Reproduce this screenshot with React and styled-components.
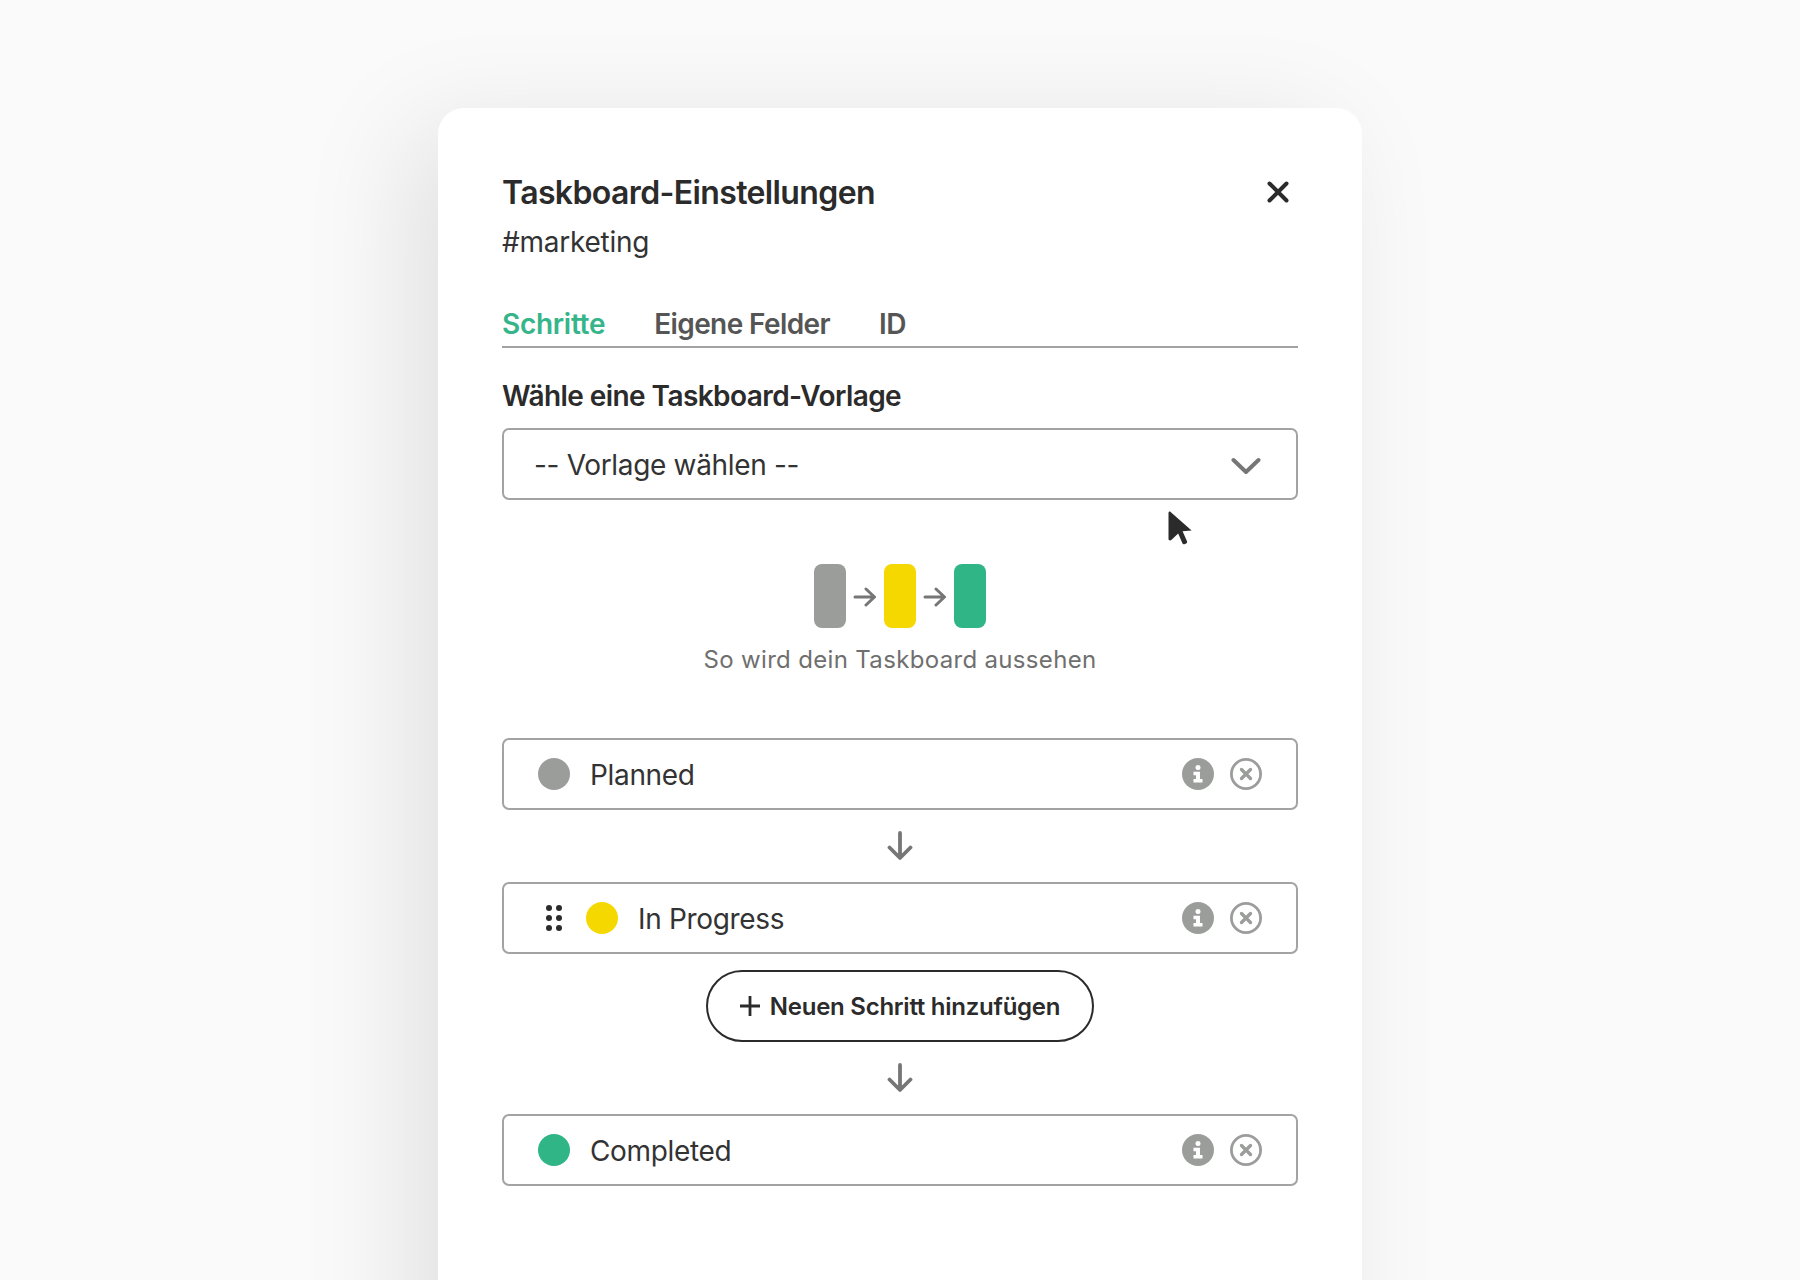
import React from "react";
import styled, { createGlobalStyle } from "styled-components";

const Global = createGlobalStyle`
  html, body { margin: 0; padding: 0; height: 100%; overflow: hidden; background: #fafafa; }
  * { box-sizing: border-box; }
  body { font-family: Inter, "Liberation Sans", sans-serif; color: #2b2b2b; }
`;

const Page = styled.div`
  height: 1280px;
  overflow: hidden;
  padding-top: 108px;
  display: flex;
  justify-content: center;
  background: #fafafa;
`;
const Card = styled.div`
  position: relative;
  width: 924px;
  height: 1300px;
  flex: none;
  background: #fff;
  border-radius: 26px;
  padding: 65px 64px 0;
  box-shadow: -30px 20px 110px rgba(0, 0, 0, 0.1);
`;
const Header = styled.div`
  display: flex;
  justify-content: space-between;
  align-items: flex-start;
`;
const Title = styled.h1`
  margin: 0;
  font-size: 32px;
  line-height: 40px;
  font-weight: 600;
  letter-spacing: -0.62px;
  color: #2b2b2b;
`;
const CloseButton = styled.button`
  border: 0;
  background: none;
  padding: 0;
  width: 22px;
  height: 22px;
  margin: 8px 9px 0 0;
  display: flex;
`;
const Channel = styled.div`
  margin-top: 11px;
  font-size: 28px;
  line-height: 36px;
  letter-spacing: -0.25px;
  color: #333;
`;
const Tabs = styled.div`
  margin-top: 46px;
  display: flex;
  gap: 49px;
  height: 42px;
  border-bottom: 2px solid #a3a3a3;
`;
const Tab = styled.div`
  font-size: 28px;
  line-height: 36px;
  font-weight: 600;
  letter-spacing: ${(p) => (p.$active ? "-0.3px" : "-0.6px")};
  color: ${(p) => (p.$active ? "#36b58a" : "#555")};
`;
const Label = styled.div`
  margin-top: 30px;
  font-size: 28px;
  line-height: 36px;
  font-weight: 600;
  letter-spacing: -0.57px;
  color: #2b2b2b;
`;
const Field = styled.div`
  height: 72px;
  border: 2px solid #a3a3a3;
  border-radius: 7px;
  display: flex;
  align-items: center;
  background: #fff;
  font-size: 28px;
  letter-spacing: -0.33px;
  color: #333;
`;
const Select = styled(Field)`
  margin-top: 14px;
  padding: 0 35px 0 30px;
  justify-content: space-between;
`;
const SelectValue = styled.span`
  padding-top: 2px;
`;
const ChevronSlot = styled.span`
  display: flex;
  margin-top: 3px;
`;
const Preview = styled.div`
  margin-top: 64px;
  display: flex;
  flex-direction: column;
  align-items: center;
`;
const PreviewBars = styled.div`
  display: flex;
  align-items: center;
`;
const Bar = styled.div`
  width: 32px;
  height: 64px;
  border-radius: 8px;
  background: ${(p) => p.$color};
`;
const PreviewArrow = styled.div`
  width: 38px;
  margin-top: 1px;
  display: flex;
  justify-content: center;
`;
const PreviewText = styled.div`
  margin-top: 16px;
  font-size: 24px;
  line-height: 32px;
  color: #6f6f6f;
  letter-spacing: 0.33px;
`;
const Steps = styled.div`
  margin-top: 62px;
  display: flex;
  flex-direction: column;
  align-items: center;
`;
const StepRow = styled(Field)`
  width: 100%;
  padding: 0 34px 0 34px;
`;
const Dot = styled.span`
  width: 32px;
  height: 32px;
  border-radius: 50%;
  flex: none;
  background: ${(p) => p.$color};
`;
const StepName = styled.span`
  margin-left: 20px;
  padding-top: 2px;
  flex: 1;
  line-height: 36px;
  color: #333;
`;
const Grip = styled.span`
  display: flex;
  width: 16px;
  margin: 0 24px 0 8px;
  flex: none;
`;
const StepActions = styled.div`
  display: flex;
  gap: 16px;
  align-items: center;
`;
const ArrowGap = styled.div`
  height: 72px;
  display: flex;
  align-items: center;
  justify-content: center;
`;
const AddButton = styled.button`
  margin-top: 16px;
  height: 72px;
  width: 388px;
  border: 2px solid #2b2b2b;
  border-radius: 36px;
  background: #fff;
  display: flex;
  align-items: center;
  justify-content: center;
  gap: 10px;
  font-family: inherit;
  font-size: 24px;
  font-weight: 600;
  letter-spacing: -0.25px;
  color: #2b2b2b;
`;
const Pointer = styled.div`
  position: absolute;
  left: 730px;
  top: 403px;
  display: flex;
`;

const XIcon = () => (
  <svg width="22" height="22" viewBox="0 0 22 22" fill="none" stroke="#2b2b2b" strokeWidth="4" strokeLinecap="round">
    <path d="M2.5 2.5L19.5 19.5M19.5 2.5L2.5 19.5" />
  </svg>
);
const Chevron = () => (
  <svg width="30" height="18" viewBox="0 0 30 18" fill="none" stroke="#767676" strokeWidth="4" strokeLinecap="round" strokeLinejoin="round">
    <path d="M2.5 3L15 15L27.5 3" />
  </svg>
);
const RightArrow = () => (
  <svg width="24" height="20" viewBox="0 0 24 20" fill="none" stroke="#767676" strokeWidth="3" strokeLinecap="round" strokeLinejoin="round">
    <path d="M2 10H21M13 2L21.5 10L13 18" />
  </svg>
);
const DownArrow = () => (
  <svg width="26" height="30" viewBox="0 0 26 30" fill="none" stroke="#767676" strokeWidth="3.8" strokeLinecap="round" strokeLinejoin="round">
    <path d="M13 2V26.5M2.5 16.5L13 27L23.5 16.5" />
  </svg>
);
const GripIcon = () => (
  <svg width="16" height="26" viewBox="0 0 16 26" fill="#2b2b2b">
    {[3, 13, 23].flatMap((y) => [3, 13].map((x) => <circle key={`${x}-${y}`} cx={x} cy={y} r="3" />))}
  </svg>
);
const InfoIcon = () => (
  <svg width="32" height="32" viewBox="0 0 32 32">
    <circle cx="16" cy="16" r="16" fill="#9b9d9b" />
    <circle cx="16" cy="9.5" r="2.5" fill="#fff" />
    <path d="M11.5 13.8H18V21H20.5V24.4H11.5V21H14V17.2H11.5Z" fill="#fff" />
  </svg>
);
const RemoveIcon = () => (
  <svg width="32" height="32" viewBox="0 0 32 32" fill="none" stroke="#9b9d9b">
    <circle cx="16" cy="16" r="14.6" strokeWidth="2.8" />
    <path d="M11.5 11.5L20.5 20.5M20.5 11.5L11.5 20.5" strokeWidth="3.4" strokeLinecap="round" />
  </svg>
);
const PlusIcon = () => (
  <svg width="20" height="20" viewBox="0 0 20 20" fill="none" stroke="#2b2b2b" strokeWidth="2.8">
    <path d="M10 0V20M0 10H20" />
  </svg>
);
const PointerIcon = () => (
  <svg width="26" height="34" viewBox="0 0 26 34" fill="#2b2b2b">
    <path d="M0.5 2C0.5 0.6 1.6 0 2.6 0.9L23.6 19.4L14.6 20.2L19 30.2C19.4 31.2 19 32 18.2 32.4L16.4 33.2C15.6 33.5 14.8 33.2 14.4 32.3L10.2 22.6L3.6 28.8C2.2 30 0.5 29.4 0.5 28Z" />
  </svg>
);

const Actions = () => (
  <StepActions>
    <InfoIcon />
    <RemoveIcon />
  </StepActions>
);

export default function App() {
  return (
    <Page>
      <Global />
      <Card>
        <Header>
          <Title>Taskboard-Einstellungen</Title>
          <CloseButton aria-label="Schließen"><XIcon /></CloseButton>
        </Header>
        <Channel>#marketing</Channel>
        <Tabs>
          <Tab $active>Schritte</Tab>
          <Tab>Eigene Felder</Tab>
          <Tab>ID</Tab>
        </Tabs>
        <Label>Wähle eine Taskboard-Vorlage</Label>
        <Select>
          <SelectValue>-- Vorlage wählen --</SelectValue>
          <ChevronSlot><Chevron /></ChevronSlot>
        </Select>
        <Preview>
          <PreviewBars>
            <Bar $color="#9b9d9b" />
            <PreviewArrow><RightArrow /></PreviewArrow>
            <Bar $color="#f5d800" />
            <PreviewArrow><RightArrow /></PreviewArrow>
            <Bar $color="#2fb586" />
          </PreviewBars>
          <PreviewText>So wird dein Taskboard aussehen</PreviewText>
        </Preview>
        <Steps>
          <StepRow>
            <Dot $color="#9b9d9b" />
            <StepName>Planned</StepName>
            <Actions />
          </StepRow>
          <ArrowGap><DownArrow /></ArrowGap>
          <StepRow>
            <Grip><GripIcon /></Grip>
            <Dot $color="#f5d800" />
            <StepName>In Progress</StepName>
            <Actions />
          </StepRow>
          <AddButton><PlusIcon />Neuen Schritt hinzufügen</AddButton>
          <ArrowGap><DownArrow /></ArrowGap>
          <StepRow>
            <Dot $color="#2fb586" />
            <StepName>Completed</StepName>
            <Actions />
          </StepRow>
        </Steps>
        <Pointer><PointerIcon /></Pointer>
      </Card>
    </Page>
  );
}
